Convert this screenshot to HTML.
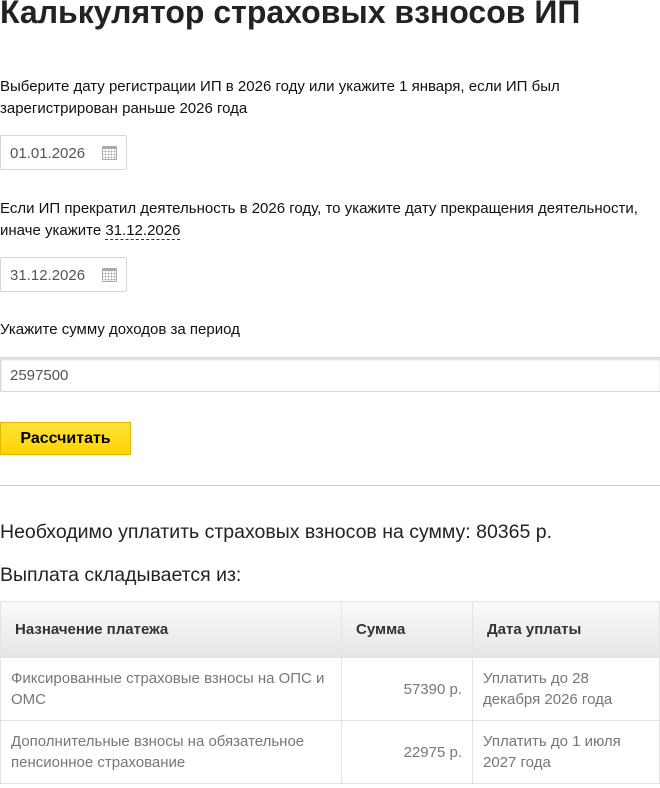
<!DOCTYPE html><html><head><meta charset="utf-8"><style>
body{margin:0;width:660px;height:788px;overflow:hidden;font-family:"Liberation Sans",Arial,sans-serif;color:#000;background:#fff;position:relative}
.a{position:absolute}
h1{position:absolute;left:0;top:-6px;margin:0;font-size:32px;font-weight:bold;color:#222;white-space:nowrap}
.t{font-size:15px;line-height:22px;color:#111}
.in{border:1px solid #d6d6d6;box-sizing:border-box;font-size:15px;color:#555;border-radius:2px}
.cal{position:absolute;right:9px;top:10px;width:15px;height:14px;border:1px solid #aaa;box-sizing:border-box;border-top-width:3px;border-radius:1px;
background:radial-gradient(circle,#aaa 0.8px,transparent 1px) 1px 1px/3px 3px}
table{border-collapse:collapse;font-size:15px;table-layout:fixed}
td,th{border:1px solid #e3e3e3;vertical-align:middle}
</style></head><body>
<h1>Калькулятор страховых взносов ИП</h1>
<div class="a t" style="left:0;top:76px;width:600px">Выберите дату регистрации ИП в 2026 году или укажите 1 января, если ИП был зарегистрирован раньше 2026 года</div>
<div class="a in" style="left:0;top:135px;width:127px;height:35px;padding:9px 0 0 9px">01.01.2026<span class="cal"></span></div>
<div class="a t" style="left:0;top:198px;width:665px;white-space:nowrap">Если ИП прекратил деятельность в 2026 году, то укажите дату прекращения деятельности,<br>иначе укажите <span style="border-bottom:1px dashed #333">31.12.2026</span></div>
<div class="a in" style="left:0;top:257px;width:127px;height:35px;padding:9px 0 0 9px">31.12.2026<span class="cal"></span></div>
<div class="a t" style="left:0;top:319px">Укажите сумму доходов за период</div>
<div class="a in" style="left:0;top:357px;width:661px;height:35px;padding:9px 0 0 9px;box-shadow:inset 0 2px 2px #ddd">2597500</div>
<div class="a" style="left:0;top:422px;width:131px;height:33px;box-sizing:border-box;border:1px solid #e0b800;background:linear-gradient(#ffe23a,#ffd400);font-weight:bold;font-size:16px;text-align:center;line-height:31px">Рассчитать</div>
<div class="a" style="left:0;top:485px;width:660px;border-top:1px solid #ccc"></div>
<div class="a" style="left:0;top:521px;font-size:19.5px;color:#222">Необходимо уплатить страховых взносов на сумму: 80365 р.</div>
<div class="a" style="left:0;top:564px;font-size:19.5px;color:#222">Выплата складывается из:</div>
<table class="a" style="left:0;top:601px;width:660px">
<colgroup><col style="width:341px"><col style="width:131px"><col></colgroup>
<tr style="height:56px;background:linear-gradient(#fafafa,#e6e6e6)"><th style="text-align:left;padding-left:14px;color:#333">Назначение платежа</th><th style="text-align:left;padding-left:14px;color:#333">Сумма</th><th style="text-align:left;padding-left:14px;color:#333">Дата уплаты</th></tr>
<tr style="height:63px;color:#777;line-height:21px"><td style="padding:0 10px">Фиксированные страховые взносы на ОПС и ОМС</td><td style="text-align:right;padding-right:10px">57390 р.</td><td style="padding:0 10px">Уплатить до 28 декабря 2026 года</td></tr>
<tr style="height:63px;color:#777;line-height:21px"><td style="padding:0 10px">Дополнительные взносы на обязательное пенсионное страхование</td><td style="text-align:right;padding-right:10px">22975 р.</td><td style="padding:0 10px">Уплатить до 1 июля 2027 года</td></tr>
</table>
</body></html>
